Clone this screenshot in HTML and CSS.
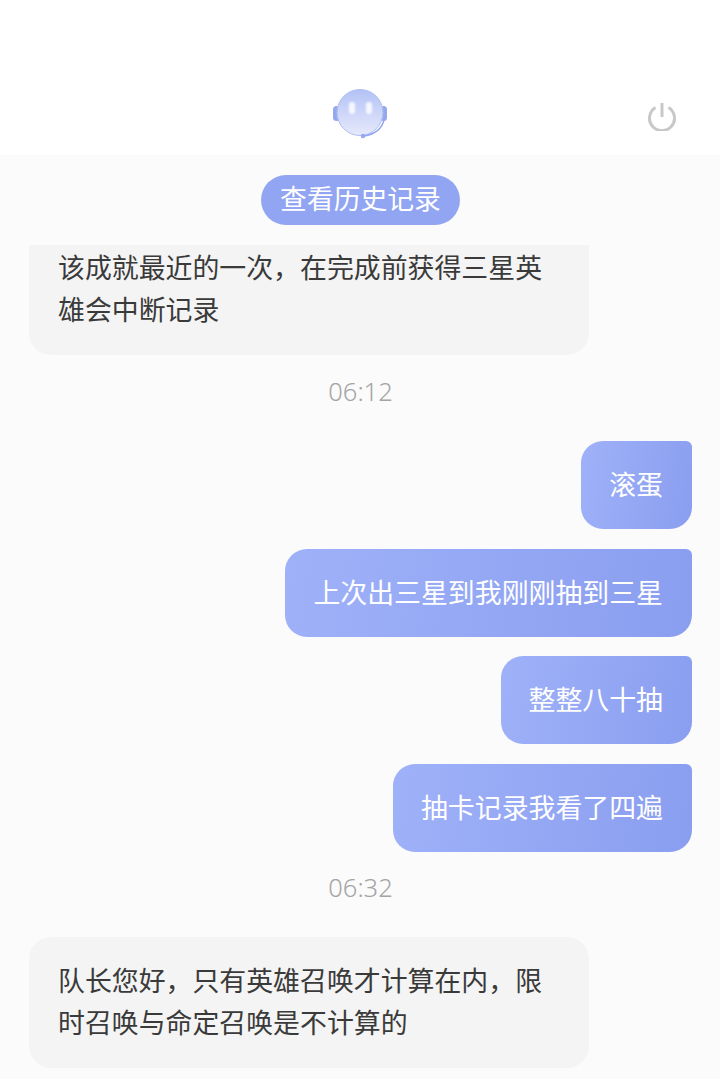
FILE: index.html
```html
<!DOCTYPE html>
<html lang="zh-CN">
<head>
  <meta charset="UTF-8" />
  <meta name="viewport" content="width=device-width, initial-scale=1.0" />
  <title>客服</title>
  <link rel="stylesheet" href="styles.css">
</head>
<body>
  <header class="topbar">
    <svg class="avatar" width="56" height="52" viewBox="0 0 56 52">
      <defs>
        <linearGradient id="face" x1="0" y1="0" x2="0" y2="1">
          <stop offset="0" stop-color="#b3c2f6"/>
          <stop offset="1" stop-color="#e7eafc"/>
        </linearGradient>
        <filter id="soft" x="-50%" y="-50%" width="200%" height="200%">
          <feGaussianBlur stdDeviation="0.8"/>
        </filter>
      </defs>
      <!-- ear pads -->
      <rect x="1" y="18" width="7" height="15" rx="3.500" fill="#94a8ee"/>
      <rect x="48" y="18" width="7" height="15" rx="3.500" fill="#94a8ee"/>
      <circle cx="28" cy="24.500" r="23" fill="url(#face)" stroke="#aebdf4" stroke-width="1"/>
      <!-- eyes -->
      <rect x="17" y="14" width="6" height="12" rx="3" fill="#fff" fill-opacity="0.85" filter="url(#soft)"/>
      <rect x="34" y="14" width="6" height="12" rx="3" fill="#fff" fill-opacity="0.85" filter="url(#soft)"/>
      <!-- mic arm -->
      <path d="M52 32 Q49 45 32 48" fill="none" stroke="#94a8ee" stroke-width="1.500"/>
      <circle cx="31" cy="48" r="2.200" fill="#94a8ee"/>
    </svg>
    <svg class="power" width="30" height="30" viewBox="0 0 30 30">
      <path d="M8.500 6.500 A12.500 12.500 0 1 0 21.500 6.500" fill="none" stroke="#c8c8c8" stroke-width="3"/>
      <path d="M15 2 V16" fill="none" stroke="#c8c8c8" stroke-width="3"/>
    </svg>
  </header>

  <main class="chat">
    <div class="history-row">
      <button class="history-btn">查看历史记录</button>
    </div>

    <div class="messages">
      <div class="bubble bubble-in bubble-cut">该成就最近的一次，在完成前获得三星英雄会中断记录</div>
      <div class="time time-first">06:12</div>
      <div class="bubble bubble-out">滚蛋</div>
      <div class="bubble bubble-out">上次出三星到我刚刚抽到三星</div>
      <div class="bubble bubble-out">整整八十抽</div>
      <div class="bubble bubble-out">抽卡记录我看了四遍</div>
      <div class="time time-second">06:32</div>
      <div class="bubble bubble-in">队长您好，只有英雄召唤才计算在内，限时召唤与命定召唤是不计算的</div>
    </div>
  </main>
</body>
</html>
```

FILE: styles.css
```css
* {
  box-sizing: border-box;
}
html, body {
  height: 100%;
}
body {
  margin: 0;
  height: 1079px;
  overflow: hidden;
  display: flex;
  flex-direction: column;
  font-family: "Noto Sans CJK SC", "Noto Sans", sans-serif;
  background-color: #fbfbfb;
}
.topbar {
  height: 155px;
  flex-shrink: 0;
  background-color: #fff;
  display: flex;
  justify-content: center;
  padding-top: 88px;
  position: relative;
}
.avatar {
  display: block;
}
.power {
  position: absolute;
  left: 647px;
  top: 101px;
}
.chat {
  flex: 1;
  min-height: 0;
  display: flex;
  flex-direction: column;
}
.history-row {
  display: flex;
  justify-content: center;
  padding: 20px 0 0 1px;
  height: 90px;
  flex-shrink: 0;
}
.history-btn {
  width: 199px;
  height: 50px;
  padding: 0 0 4px;
  border: none;
  border-radius: 25px;
  background-color: #92a5f2;
  color: #fff;
  font-family: inherit;
  font-size: 26.800px;
  line-height: 46px;
}
.messages {
  flex: 1;
  min-height: 0;
  overflow: hidden;
  display: flex;
  flex-direction: column;
  padding: 0 28px 0 29px;
}
.bubble {
  font-size: 26.900px;
  line-height: 42px;
  flex-shrink: 0;
}
.bubble-in {
  width: 560px;
  padding: 22px 30px 25px 29px;
  background-color: #f4f4f4;
  color: #3a3a3a;
  border-radius: 22px;
}
/* first message is scrolled partly under the history button */
.bubble-cut {
  margin-top: -21px;
}
.bubble-out {
  align-self: flex-end;
  height: 88px;
  padding: 22px 29px 22px 28px;
  margin-bottom: 19.500px;
  background: linear-gradient(100deg, #9fb1f8, #8a9ef0);
  color: #fff;
  border-radius: 22px 6px 22px 22px;
}
.time {
  text-align: center;
  font-size: 25.500px;
  font-weight: 300;
  line-height: 30px;
  color: #a4a4a4;
  font-family: "Noto Sans", sans-serif;
}
.time-first {
  margin: 21px 0 35px;
}
.time-second {
  margin: 1px 0 35px;
}
```
